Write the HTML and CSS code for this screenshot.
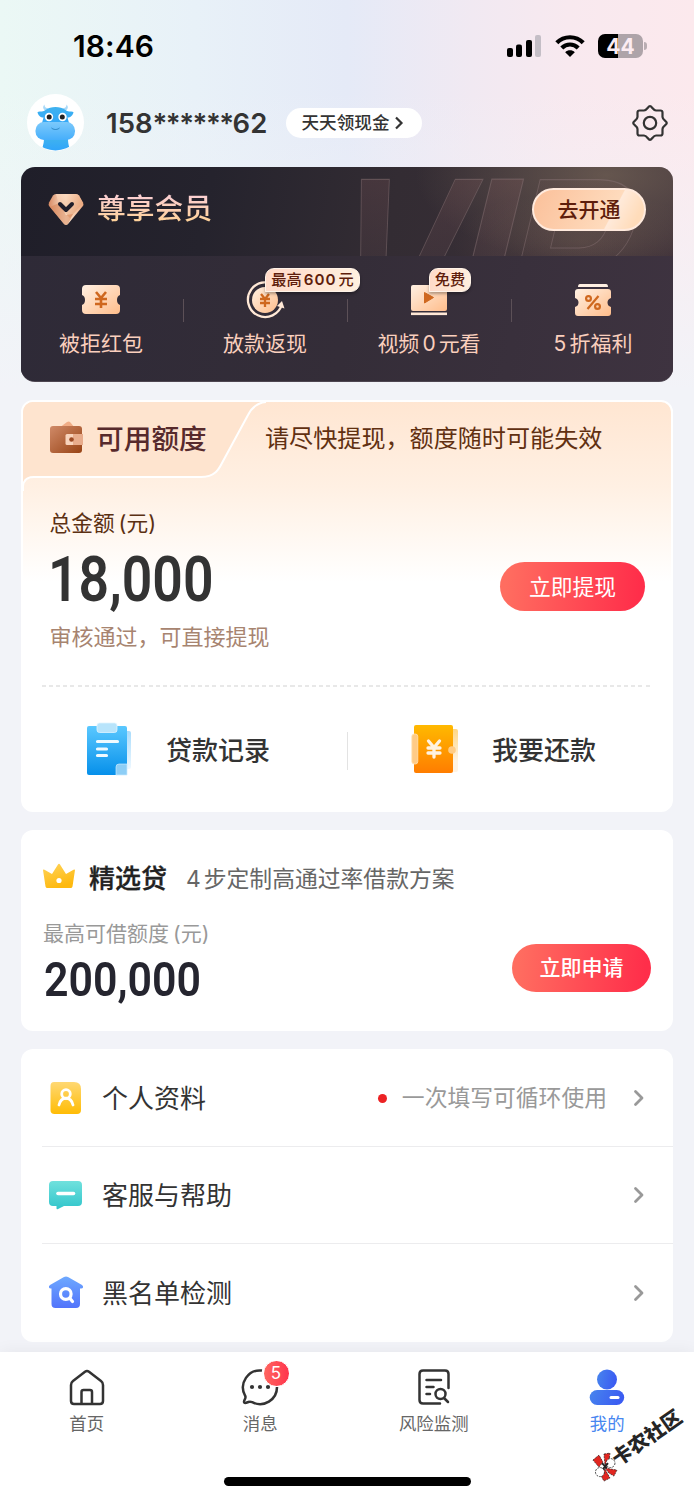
FILE: index.html
```html
<!DOCTYPE html>
<html lang="zh-CN">
<head>
<meta charset="utf-8">
<meta name="viewport" content="width=device-width, initial-scale=1">
<title>我的</title>
<link rel="stylesheet" href="styles.css">
</head>
<body>
<div class="screen">
  <div class="statusbar">
    <span class="time">18:46</span>
    <div class="status-icons">
      <svg class="signal" width="35" height="22" viewBox="0 0 35 22">
        <rect x="0" y="13" width="6" height="9" rx="2"/><rect x="9" y="9.500" width="6" height="12.500" rx="2"/><rect x="19" y="5" width="6" height="17" rx="2"/><rect x="28" y="0" width="6" height="22" rx="2" fill="#c4bec6"/>
      </svg>
      <svg class="wifi" width="30" height="22" viewBox="0 0 30 22" fill="none" stroke="#000" stroke-width="4.200">
        <path d="M1.800 7.800C9 .400 21 .400 28.200 7.800"/><path d="M6.800 13C11.500 8.300 18.500 8.300 23.200 13"/><path d="M15 22l-4.800-4.800c2.700-2.600 6.900-2.600 9.600 0z" fill="#000" stroke="none"/>
      </svg>
      <div class="battery"><span>44</span></div>
      <i class="battery-cap"></i>
    </div>
  </div>

  <header class="profile">
    <svg class="avatar" width="57" height="57" viewBox="0 0 57 57">
      <defs>
        <linearGradient id="cow" x1="0" y1="0" x2="0" y2="1"><stop offset="0" stop-color="#3fb2ef"/><stop offset="1" stop-color="#2fa4fb"/></linearGradient>
        <linearGradient id="snout" x1="0" y1="0" x2="0" y2="1"><stop offset="0" stop-color="#7cc9fb"/><stop offset="1" stop-color="#46aefb"/></linearGradient>
        <clipPath id="avatar-clip"><circle cx="28.500" cy="28.500" r="28"/></clipPath>
      </defs>
      <circle cx="28.500" cy="28.500" r="28.500" fill="#fff"/>
      <g clip-path="url(#avatar-clip)">
        <path d="M17 45h24c0 6 2 9 2 12H15c0-4 2-7 2-12z" fill="url(#cow)"/>
        <path d="M20 17c-4-1-5-4-2.500-6.500 0 3.500 2.500 3.500 5.500 4.500zM37 17c4-1 5-4 2.500-6.500 0 3.500-2.500 3.500-5.500 4.500z" fill="#a9d9f8"/>
        <path d="M10.500 18c3-1 6 0 8-2 5-4 15-4 20 0 2 2 5 1 8 2-.5 3.500-3 5.500-6 5.500l3 11h-30l3-11c-3 0-5.500-2-6-5.500z" fill="url(#cow)"/>
        <rect x="8.500" y="28" width="39.500" height="18" rx="8.500" fill="url(#snout)"/>
        <circle cx="22" cy="23" r="4.200" fill="#fff"/><circle cx="35.500" cy="23" r="4.200" fill="#fff"/>
        <circle cx="22.200" cy="23" r="2.500" fill="#222"/><circle cx="35.300" cy="23" r="2.500" fill="#222"/>
        <path d="M24.500 34c2.500 2 5.500 2 8 0" fill="none" stroke="#267fbc" stroke-width="1"/>
      </g>
    </svg>
    <span class="phone">158<em>******</em>62</span>
    <a class="cash-pill">天天领现金
      <svg width="10" height="14" viewBox="0 0 10 14" fill="none" stroke="#333" stroke-width="2.200"><path d="M2 1.500l5.500 5.500L2 12.500"/></svg>
    </a>
    <svg class="gear" width="38" height="38" viewBox="0 0 38 38" fill="none" stroke="#333" stroke-width="2.200" stroke-linejoin="round">
      <path d="M19 2.200C21 2.200 22 6.500 25 6.500H29.500Q31.500 6.500 31.500 8.500V13C31.500 16 35.800 17 35.800 19S31.500 22 31.500 25V29.500Q31.500 31.500 29.500 31.500H25C22 31.500 21 35.800 19 35.800S16 31.500 13 31.500H8.500Q6.500 31.500 6.500 29.500V25C6.500 22 2.200 21 2.200 19S6.500 16 6.500 13V8.500Q6.500 6.500 8.500 6.500H13C16 6.500 17 2.200 19 2.200Z"/>
      <circle cx="19" cy="19" r="6.200"/>
    </svg>
  </header>

  <section class="vip">
    <svg class="vip-mark" width="652" height="89" viewBox="0 0 652 89">
      <defs><linearGradient id="mark" x1="0" y1="0" x2="0" y2="1"><stop offset="0" stop-color="#8a5a5a" stop-opacity=".34"/><stop offset=".5" stop-color="#73535a" stop-opacity=".14"/></linearGradient></defs>
      <g font-family="Liberation Sans" font-weight="700" font-size="200" fill="url(#mark)" stroke="#8b7578" stroke-opacity=".45" stroke-width="1">
        <text transform="matrix(.93 0 -.357 1.400 290 205)">V</text>
        <text transform="matrix(1.100 0 -.259 1.060 420.500 158)">I</text>
        <text transform="matrix(.930 0 -.245 1.020 473 152.500)" fill-opacity=".3">P</text>
      </g>
    </svg>
    <div class="vip-top">
      <svg width="36" height="33" viewBox="0 0 36 33">
        <defs>
          <linearGradient id="gem" x1="0" y1="0" x2="1" y2="0"><stop offset="0" stop-color="#d98a63"/><stop offset=".5" stop-color="#fff0dd"/><stop offset="1" stop-color="#eda77e"/></linearGradient>
          <linearGradient id="gem2" x1="0" y1="0" x2="1" y2="1"><stop offset="0" stop-color="#ffdcc2"/><stop offset="1" stop-color="#de905f"/></linearGradient>
        </defs>
        <path d="M8 1h20q2 0 3 1.500l4 7q1 2-.5 4L20 31q-2 2-4 0L1.500 13.500q-1.500-2-.5-4l4-7Q6 1 8 1z" fill="url(#gem)"/>
        <path d="M8 1h20q2 0 3 1.500L35 10 22 25 12 15z" fill="url(#gem2)" opacity=".65"/>
        <path d="M2 14l9-4 7 12 7-1-5 10q-2 2-4 0z" fill="#d78456" opacity=".55"/>
        <path d="M12 11l6 6 6-6" fill="none" stroke="#211f2b" stroke-width="4" stroke-linecap="round" stroke-linejoin="round"/>
      </svg>
      <h2 class="vip-title">尊享会员</h2>
      <a class="vip-btn">去开通</a>
    </div>
    <div class="perks">
      <div class="perk">
        <svg width="40" height="32" viewBox="0 0 40 32">
          <defs><linearGradient id="peach" x1="0" y1="0" x2="1" y2="1"><stop offset="0" stop-color="#fff0e2"/><stop offset="1" stop-color="#ffbd8b"/></linearGradient></defs>
          <path d="M5 1h30q4 0 4 4v6q-3 1-3 5t3 5v5q0 4-4 4H5q-4 0-4-4v-5q3-1 3-5t-3-5V5q0-4 4-4z" fill="url(#peach)"/>
          <g fill="none" stroke="#cf681f" stroke-width="2.600"><path d="M15 8l5 6 5-6M20 14v10M14 15h12M14 20h12"/></g>
        </svg>
        <span>被拒红包</span>
      </div>
      <div class="perk">
        <svg width="40" height="40" viewBox="0 0 40 40">
          <circle cx="20" cy="20" r="13" fill="url(#peach)"/>
          <path d="M33 8A17.300 17.300 0 1 0 37 24" fill="none" stroke="#ffe8d6" stroke-width="2.300"/><path d="M37 21l-5 5 7.500 2.500z" fill="#ffe8d6"/>
          <g fill="none" stroke="#cf681f" stroke-width="2.300"><path d="M16 14l4 5 4-5M20 19v8M15 19h10M15 23h10"/></g>
        </svg>
        <b class="tag tag-wide">最高<em>600</em>元</b>
        <span>放款返现</span>
      </div>
      <div class="perk">
        <svg width="38" height="32" viewBox="0 0 38 32">
          <rect x="1" y="1" width="36" height="26" rx="2" fill="url(#peach)"/><rect x="1" y="28.500" width="36" height="2.600" fill="#ffe8d6"/>
          <path d="M14.500 8.500l9 5-9 5.500z" fill="#cf681f" stroke="#cf681f"/>
        </svg>
        <b class="tag tag-short">免费</b>
        <span>视频<em>0</em>元看</span>
      </div>
      <div class="perk">
        <svg width="38" height="34" viewBox="0 0 38 34">
          <path d="M6 1h26q2 0 2 3H4q0-3 2-3z" fill="#fff0e2"/>
          <path d="M4 6h30q3 0 3 3v6q-3.500 1-3.500 4.500T37 24v6q0 3-3 3H4q-3 0-3-3v-6q3.500-1 3.500-4.500T1 15V9q0-3 3-3z" fill="url(#peach)"/>
          <g fill="none" stroke="#cf681f" stroke-width="2.200"><circle cx="14.500" cy="15.500" r="2.400"/><circle cx="23.500" cy="23.500" r="2.400"/><path d="M24.500 13l-11 13"/></g>
        </svg>
        <span><em>5</em>折福利</span>
      </div>
    </div>
  </section>

  <section class="card credit">
    <svg class="tab-shape" width="652" height="90" viewBox="0 0 652 90">
      <path d="M0 90V0H252Q234 0 227 13L200 63Q193 77 180 77H12Q2 77 2 87V90z" fill="#fee4cf"/>
      <path d="M2 90V85Q3 76 13 76H180C194 76 198 68 201 62L227 14Q233 2 245 1" fill="none" stroke="#fff" stroke-width="2"/>
    </svg>
    <div class="credit-head">
      <svg width="34" height="34" viewBox="0 0 34 34">
        <defs><linearGradient id="wallet" x1="0" y1="0" x2="1" y2="1"><stop offset="0" stop-color="#d08a68"/><stop offset="1" stop-color="#984315"/></linearGradient></defs>
        <path d="M10 8l8-6q2-1 3 0l5 6z" fill="#f0ad87"/><rect x="1" y="6" width="32" height="27" rx="3" fill="url(#wallet)"/>
        <path d="M18 14h16v11H18q-1.500 0-1.500-1.500v-8Q16.500 14 18 14z" fill="#f8d3bc"/><path d="M24 14h10v11H24z" fill="#dd936c" opacity=".6"/><circle cx="22.500" cy="19.500" r="2.300" fill="#9c4923"/>
      </svg>
      <h2>可用额度</h2>
      <p>请尽快提现，额度随时可能失效</p>
    </div>
    <div class="credit-body">
      <div class="credit-info">
        <div class="total-label">总金额<em>(</em>元)</div>
        <div class="amount">18,000</div>
        <div class="approved">审核通过，可直接提现</div>
      </div>
      <a class="btn btn-cash">立即提现</a>
    </div>
    <div class="dash"></div>
    <div class="actions">
      <div class="action">
        <svg width="46" height="54" viewBox="0 0 46 54">
          <defs><linearGradient id="blue" x1="0" y1="0" x2="0" y2="1"><stop offset="0" stop-color="#5ac8ff"/><stop offset="1" stop-color="#0690ea"/></linearGradient>
          <linearGradient id="sheet" x1="0" y1="0" x2="0" y2="1"><stop offset="0" stop-color="#a9dcfc"/><stop offset="1" stop-color="#eef8ff"/></linearGradient></defs>
          <rect x="35" y="9" width="10" height="38" rx="2" fill="url(#sheet)"/>
          <path d="M3 4h36q2 0 2 2v47H3q-2 0-2-2V6q0-2 2-2z" fill="url(#blue)"/>
          <rect x="11" y="1" width="20" height="9.500" rx="2.500" fill="#b8e4fb" stroke="#dff4ff" stroke-width=".8"/>
          <path d="M41 42v11H30V45q0-3 3-3z" fill="#8dcef6" stroke="#c9eaff" stroke-width=".7"/>
          <path d="M11.500 19.500h20M11.500 27h9M11.500 33.500h9" stroke="#effaff" stroke-width="3.200" stroke-linecap="round"/>
        </svg>
        <span>贷款记录</span>
      </div>
      <div class="action">
        <svg width="48" height="52" viewBox="0 0 48 52">
          <defs><linearGradient id="orange" x1="0" y1="0" x2="0" y2="1"><stop offset="0" stop-color="#ffb900"/><stop offset="1" stop-color="#ff7d00"/></linearGradient>
          <linearGradient id="backsheet" x1="0" y1="0" x2="0" y2="1"><stop offset="0" stop-color="#ffd783"/><stop offset=".75" stop-color="#fff3e3"/></linearGradient></defs>
          <rect x="37" y="6" width="10" height="43" rx="2" fill="url(#backsheet)"/>
          <rect x="3" y="2" width="39" height="48" rx="2" fill="url(#orange)"/>
          <rect x=".8" y="11" width="6" height="30" rx="2.500" fill="#ffcb86" stroke="#ffe2b8" stroke-width=".8"/>
          <circle cx="41" cy="27" r="3.800" fill="#ffcc85"/>
          <g fill="none" stroke="#fff2e1" stroke-width="3.300" stroke-linecap="round"><path d="M17.500 18l5.500 6.500 5.500-6.500M23 25v9M17 25h12M17 30h12"/></g>
        </svg>
        <span>我要还款</span>
      </div>
    </div>
  </section>

  <section class="card pick">
    <div class="pick-head">
      <svg width="32" height="26" viewBox="0 0 32 26">
        <defs><linearGradient id="crown" x1="0" y1="0" x2=".4" y2="1"><stop offset="0" stop-color="#ffd45c"/><stop offset="1" stop-color="#feb90f"/></linearGradient></defs>
        <path d="M0 7q0-1 1.500-.3L9 11l6-9.500q1-1.500 2 0L23 11l7.500-4.300Q32 6 32 7l-2.500 16.500q-.3 1.500-2 1.500h-23q-1.700 0-2-1.500z" fill="url(#crown)"/><circle cx="16" cy="17.500" r="2.600" fill="#fff"/>
      </svg>
      <h2>精选贷</h2>
      <p><em>4</em>步定制高通过率借款方案</p>
    </div>
    <div class="pick-body">
      <div>
        <div class="max-label">最高可借额度<em>(</em>元)</div>
        <div class="amount-small">200,000</div>
      </div>
      <a class="btn btn-apply">立即申请</a>
    </div>
  </section>

  <nav class="card menu">
    <a class="menu-row">
      <svg width="36" height="36" viewBox="0 0 36 36">
        <defs><linearGradient id="yellow" x1="0" y1="0" x2="0" y2="1"><stop offset="0" stop-color="#ffd873"/><stop offset="1" stop-color="#ffbc05"/></linearGradient></defs>
        <path d="M6 2h20q7 0 7 7v21q0 4-4 4H6.500q-4 0-4-4V6q0-4 3.500-4z" fill="url(#yellow)"/>
        <g fill="none" stroke="#fff" stroke-width="2.800" stroke-linecap="round"><circle cx="18" cy="14" r="4.300"/><path d="M11 25c2-9 12-9 14 0"/></g>
      </svg>
      <span class="menu-label">个人资料</span>
      <i class="dot"></i><span class="hint">一次填写可循环使用</span>
      <svg class="arrow" width="12" height="18" viewBox="0 0 12 18"><path d="M2.500 2.500L9 9l-6.500 6.500"/></svg>
    </a>
    <a class="menu-row">
      <svg width="36" height="36" viewBox="0 0 36 36">
        <defs><linearGradient id="teal" x1="0" y1="0" x2="0" y2="1"><stop offset="0" stop-color="#70e1dd"/><stop offset="1" stop-color="#31c5cb"/></linearGradient></defs>
        <path d="M5 4h25q4 0 4 4v17q0 4-4 4H16l-6 3q-1.500 1-1.500-.7V29H5q-4 0-4-4V8q0-4 4-4z" fill="url(#teal)"/><path d="M10 16.500h15.500" stroke="#fff" stroke-width="3.600" stroke-linecap="round"/>
      </svg>
      <span class="menu-label">客服与帮助</span>
      <svg class="arrow" width="12" height="18" viewBox="0 0 12 18"><path d="M2.500 2.500L9 9l-6.500 6.500"/></svg>
    </a>
    <a class="menu-row">
      <svg width="36" height="36" viewBox="0 0 36 36">
        <defs><linearGradient id="indigo" x1="0" y1="0" x2="0" y2="1"><stop offset="0" stop-color="#6ea9ff"/><stop offset="1" stop-color="#5274fb"/></linearGradient></defs>
        <path d="M16 2q2-1.200 4 0l14 8q1.500 1 1 2.500-.3 1-2 1h-1V29q0 4-4 4H7.500q-4 0-4-4V13.500H3q-1.700 0-2-1-.5-1.500 1-2.500z" fill="url(#indigo)"/>
        <g fill="none" stroke="#fff" stroke-width="3.200" stroke-linecap="round"><circle cx="17.800" cy="19" r="5.300"/><path d="M22 23.500l2.500 3"/></g>
      </svg>
      <span class="menu-label">黑名单检测</span>
      <svg class="arrow" width="12" height="18" viewBox="0 0 12 18"><path d="M2.500 2.500L9 9l-6.500 6.500"/></svg>
    </a>
  </nav>

  <footer class="tabbar">
    <div class="tabs">
      <a class="tab">
        <svg width="40" height="40" viewBox="0 0 40 40" class="line"><path d="M18 3.800q2-1.500 4 0L34 13q2 1.500 2 4v16q0 3-3 3H7q-3 0-3-3V17q0-2.500 2-4zM14.500 36V24q0-2 2-2h6.500q2 0 2 2v12"/></svg>
        <span>首页</span>
      </a>
      <a class="tab">
        <svg width="40" height="40" viewBox="0 0 40 40" class="line"><path d="M22 2.600A17 17 0 0 0 5 27.500q1 1.500 0 3.500l-.8 1.800q-.8 2.500 2 2l3-1q1-.4 3 .4A17 17 0 0 0 37 19"/><g fill="#333" stroke="none"><circle cx="12" cy="19" r="2.100"/><circle cx="20" cy="19" r="2.100"/><circle cx="28" cy="19" r="2.100"/></g></svg>
        <b class="badge">5</b>
        <span>消息</span>
      </a>
      <a class="tab">
        <svg width="40" height="40" viewBox="0 0 40 40" class="line"><path d="M34.500 20V6q0-3.500-3.500-3.500H9Q5.500 2.500 5.500 6v26q0 3.500 3.500 3.500h17M12.500 12h14.500M12.500 19h7M12.500 26h3.500" stroke-linecap="round"/><circle cx="26.500" cy="26" r="5"/><path d="M30 30l4 4" stroke-linecap="round"/></svg>
        <span>风险监测</span>
      </a>
      <a class="tab active">
        <svg width="40" height="40" viewBox="0 0 40 40"><defs><linearGradient id="me" x1="0" y1="0" x2="1" y2=".2"><stop offset="0" stop-color="#4785ed"/><stop offset="1" stop-color="#3b5cf2"/></linearGradient></defs><circle cx="20" cy="11.500" r="10" fill="url(#me)"/><rect x="2.700" y="22" width="34.500" height="15" rx="7.500" fill="url(#me)"/><path d="M24 29.500h7" stroke="#fff" stroke-width="3" stroke-linecap="round"/></svg>
        <span>我的</span>
      </a>
    </div>
    <i class="home-indicator"></i>
    <div class="watermark">
      <svg width="28" height="28" viewBox="0 0 28 28">
        <g transform="rotate(35 14 14)">
          <path d="M2 7l6-5 4 7-4 5zM13 1l6-1-1 9-4 3zM14 15l12 2-3 6-5-3zM14 16l5 9-6 3-4-7z" fill="#e12620" stroke="#222" stroke-width=".7" stroke-dasharray="2 1"/>
          <circle cx="19.500" cy="10" r="4.500" fill="#fff" stroke="#222" stroke-width=".8" stroke-dasharray="2 1"/><circle cx="9" cy="19" r="4.500" fill="#fff" stroke="#222" stroke-width=".8" stroke-dasharray="2 1"/>
          <path d="M11 10l5 5M17 10l-5 6" stroke="#222" stroke-width="2"/>
        </g>
      </svg>
      <span>卡农社区</span>
    </div>
  </footer>
</div>
</body>
</html>
```
FILE: styles.css
```css
* { box-sizing: border-box; }
body, h2, p { margin: 0; }
body { font-family: Inter, "Noto Sans CJK SC", sans-serif; color: #333; }
svg { display: block; flex: none; }
em, i { font-style: normal; }
span, h2, p, a { white-space: nowrap; }

.screen {
  width: 694px;
  height: 1500px;
  overflow: hidden;
  display: flex;
  flex-direction: column;
  background:
    linear-gradient(180deg, rgba(242,243,248,0) 0, rgba(242,243,248,0) 90px, #f2f3f8 390px),
    linear-gradient(90deg, #ebf8f5 0, #e8f1f8 28%, #e5eaf7 50%, #f1e9f2 68%, #f8e9ef 82%, #fce9ed 100%);
}

.statusbar { height: 93px; padding: 0 47px 0 73px; display: flex; align-items: center; justify-content: space-between; }
.time { font-size: 30px; font-weight: 600; color: #000; letter-spacing: .1px; }
.status-icons { display: flex; align-items: center; }
.wifi { margin: 0 13px 0 13px; }
.battery {
  width: 45px; height: 24px; border-radius: 7px; color: #fcecf2;
  background: linear-gradient(90deg, #000 20px, #aea4a9 20px);
  font: 700 21px/25px Inter, sans-serif; text-align: center;
}
.battery-cap { width: 3px; height: 8px; margin-left: 1px; border-radius: 0 3px 3px 0; background: #b9adb2; }

.profile { height: 74px; padding: 0 25.500px 14px 27px; display: flex; align-items: center; }
.phone { margin-left: 22px; width: 180px; font-size: 27.500px; font-weight: 600; line-height: 40px; }
.phone em { letter-spacing: -1.500px; }
.cash-pill {
  width: 136px; height: 30px; border-radius: 15px; background: #fff;
  display: flex; align-items: center; justify-content: center; gap: 5px; padding-right: 2px;
  font-size: 17.600px; font-weight: 500; line-height: 30px;
}
.gear { margin-left: auto; }

.vip {
  position: relative; width: 652px; height: 215px; margin-left: 21px;
  border-radius: 14px; overflow: hidden; flex: none;
  background:
    radial-gradient(ellipse 190px 90px at 585px 8px, rgba(130,112,94,.6), rgba(130,112,94,0)),
    radial-gradient(ellipse 130px 50px at 560px 75px, rgba(110,88,78,.45), rgba(110,88,78,0)),
    linear-gradient(100deg, #1f1e29 0, #25232d 28%, #332c33 55%, #3d3039 100%);
  border-bottom: 1px solid #4e4651;
}
.vip-mark { position: absolute; left: 0; top: 0; }
.vip-top { position: relative; height: 89px; padding: 0 27px 4px; display: flex; align-items: center; }
.vip-title {
  margin-left: 13px; font-size: 28.800px; line-height: 40px; font-weight: 500;
  background: linear-gradient(180deg, #fbcfd0 20%, #ffd29a 80%);
  -webkit-background-clip: text; background-clip: text; color: transparent;
}
.vip-btn {
  margin-left: auto; width: 114px; height: 43px; border-radius: 22px; border: 2px solid #ffeadd;
  background: linear-gradient(118deg, #fbc09a 0, #fedbbd 69%, #ffeada 70%, #ffdcba 90%);
  color: #5e1d0b; font-size: 21px; line-height: 40px; font-weight: 500; text-align: center;
}
.perks {
  position: relative; height: 126px; display: grid; grid-template-columns: repeat(4, 164px); justify-content: center;
  background: linear-gradient(100deg, #2e2a37 0, #342d38 50%, #3e3340 100%);
}
.perk { position: relative; display: grid; grid-template-rows: 60px 28px; padding-top: 14px; justify-items: center; align-items: center; align-content: start; color: #facfbd; font-size: 21px; line-height: 28px; }
.perk + .perk::before { content: ""; position: absolute; left: 0; top: 43px; width: 1px; height: 23px; background: #5c5057; }
.perk em { margin: 0 3px; }
.perk:last-child em { margin-left: 0; }
.perk .tag {
  position: absolute; top: 12px; height: 24px; border: 1.500px solid #fff3e8; border-radius: 9px 9px 9px 0;
  background: linear-gradient(90deg, #ffdac8, #fff0df); color: #5e1d0b; text-align: center; white-space: nowrap;
  font-size: 15.200px; font-weight: 500; line-height: 21px; box-shadow: 0 2px 3px rgba(0,0,0,.3);
}
.perk .tag em { margin: 0 2px; font-weight: 600; letter-spacing: 1px; }
.tag-wide { left: 82px; width: 95px; }
.tag-short { left: 82px; width: 42px; }

.card { width: 652px; margin-left: 21px; background: #fff; border-radius: 12px; overflow: hidden; flex: none; }
.credit {
  position: relative; height: 412px; margin-top: 18px; border: 2px solid #fff;
  background: linear-gradient(180deg, #ffe6d2 0, #fff0e3 85px, #fff 180px);
}
.tab-shape { position: absolute; left: -2px; top: -1px; }
.credit-head { position: relative; height: 75px; display: flex; align-items: center; padding-left: 26px; }
.credit-head h2 { margin: 0 0 0 13px; width: 169px; color: #572a2c; font-size: 27.700px; line-height: 40px; font-weight: 500; }
.credit-head svg { margin-top: -4px; }
.credit-head p { color: #613011; font-size: 24.100px; line-height: 36px; }
.credit-body { position: relative; height: 208px; padding: 31px 26px 0 26.500px; display: flex; justify-content: space-between; }
.total-label { color: #5b3013; font-size: 21.700px; line-height: 30px; }
.total-label em, .max-label em { margin-left: 4px; }
.amount, .amount-small { font-family: Roboto, sans-serif; font-weight: 600; transform-origin: 0 50%; width: max-content; }
.amount { font-size: 63px; line-height: 60px; margin: 12px 0 0 -2px; transform: scaleX(.85); }
.approved { color: #a78470; font-size: 22px; line-height: 30px; margin-top: 12px; }
.btn { color: #fff; text-align: center; border-radius: 25px; background: linear-gradient(95deg, #ff6d60 5%, #ff2e4a 95%); }
.btn-cash { width: 145px; height: 49px; margin-top: 54px; font-size: 21.800px; line-height: 50px; }
.dash { height: 2px; margin: 0 19px; background: repeating-linear-gradient(90deg, #e8e8e8 0 4px, transparent 4px 7.100px); }
.actions { height: 123px; padding-top: 4px; display: grid; grid-template-columns: 1fr 1fr; align-items: center; }
.action { position: relative; display: flex; align-items: center; padding-left: 63px; gap: 34px; font-size: 26px; font-weight: 500; line-height: 40px; }
.action svg { margin-top: -3px; }
.action span { margin-top: 2px; }
.action + .action { padding-left: 64px; gap: 33px; }
.action + .action::before { content: ""; position: absolute; left: 0; top: 6px; width: 1px; height: 38px; background: #e3e3e3; }

.pick { height: 201px; margin-top: 18px; padding: 29px 22px 0; }
.pick-head { height: 40px; display: flex; align-items: center; }
.pick-head svg { margin-top: -5px; }
.pick-head h2 { margin: 0 19px 0 14px; font-size: 26px; line-height: 40px; font-weight: 500; color: #222; -webkit-text-stroke: .3px #222; }
.pick-head p { font-size: 22.800px; line-height: 40px; color: #666; }
.pick-head p em { margin-right: 3px; }
.pick-body { display: flex; justify-content: space-between; padding-top: 20px; }
.max-label { font-size: 21px; line-height: 30px; color: #999; }
.amount-small { font-size: 49px; line-height: 50px; margin: 6px 0 0 1px; color: #25252f; transform: scaleX(.875); }
.btn-apply { width: 139px; height: 48px; margin-top: 25px; font-size: 21px; line-height: 48px; font-weight: 500; }

.menu { height: 293px; margin-top: 18px; }
.menu-row { position: relative; height: 97.300px; padding: 2px 28px 0 27px; display: flex; align-items: center; }
.menu-row + .menu-row::before { content: ""; position: absolute; left: 21px; right: 0; top: 0; height: 1px; background: #ececee; }
.menu-label { margin: 2px 0 0 18px; font-size: 26px; line-height: 40px; }
.dot { width: 9px; height: 9px; border-radius: 50%; background: #ec2224; margin-left: auto; }
.hint { color: #999; font-size: 22.800px; line-height: 36px; margin: 0 26px 0 15px; }
.arrow { fill: none; stroke: #999; stroke-width: 2.800; stroke-linecap: round; stroke-linejoin: round; margin-left: auto; }
.hint + .arrow { margin-left: 0; }

.tabbar { position: relative; height: 148px; margin-top: 10.500px; background: #fff; flex: none; box-shadow: 0 0 16px rgba(0,0,0,.06); }
.tabs { display: grid; grid-template-columns: repeat(4, 1fr); padding-top: 15.500px; }
.tab { position: relative; display: flex; flex-direction: column; align-items: center; font-size: 17.400px; line-height: 24px; color: #666; }
.tab span { margin-top: 4px; }
.tab.active { color: #4786f0; }
.line { fill: none; stroke: #333; stroke-width: 2.500; stroke-linejoin: round; }
.badge { position: absolute; left: 89px; top: -7.500px; width: 27px; height: 27px; border-radius: 50%; border: 1px solid #fff; background: linear-gradient(90deg, #ff6660, #ff344c); color: #fff; font-size: 17px; font-weight: 400; line-height: 25px; text-align: center; }
.home-indicator { position: absolute; left: 224px; top: 124.500px; width: 247px; height: 9px; border-radius: 5px; background: #000; }
.watermark { position: absolute; left: 584px; top: 79px; display: flex; align-items: center; transform: rotate(-35deg); color: #252525; font-size: 20px; font-weight: 900; line-height: 24px; }
.watermark span { margin-left: -3px; }
```
